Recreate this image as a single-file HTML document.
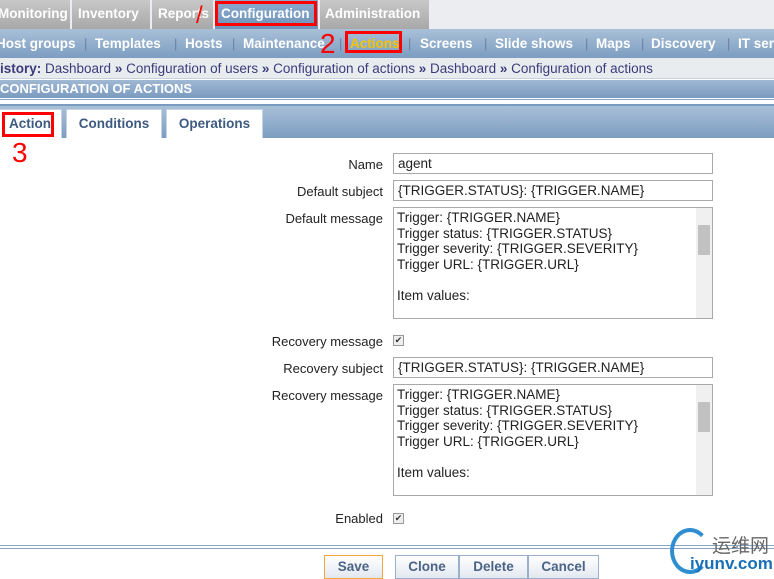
<!DOCTYPE html>
<html><head><meta charset="utf-8"><style>
*{margin:0;padding:0;box-sizing:border-box}
body{width:774px;height:577px;overflow:hidden;background:#fff;font-family:"Liberation Sans",sans-serif;font-size:13px;position:relative}
.abs{position:absolute;white-space:nowrap}
.top{top:0;left:0;width:774px;height:29px;background:#ebedf0}
.tab{position:absolute;top:0;height:29px;background:linear-gradient(#c8c8c8,#a8a8a8);color:#fff;font-weight:bold;font-size:13.5px;line-height:27px;border-right:2px solid #ebedf0;white-space:nowrap;overflow:hidden}
.tab span{position:absolute;top:0}
.sub{top:29px;left:0;width:774px;height:29px;background:linear-gradient(#a9c0d8,#7c9dc1)}
.si{position:absolute;top:29px;line-height:29px;color:#fff;font-weight:bold;font-size:13.5px;white-space:nowrap}
.sp{position:absolute;top:29px;line-height:29px;color:#6a7fa0;font-size:13px}
.hist{top:58px;left:0;width:774px;height:21px;background:#e9ecef;color:#3b3b7b;font-size:13.5px;line-height:21px;border-bottom:1px solid #c8d0dc}
.hdr{top:80px;left:0;width:774px;height:18px;background:linear-gradient(#9fb8d3,#7a9bc0);color:#fff;font-weight:bold;font-size:13px;line-height:18px}
.tabs{top:104px;left:0;width:774px;height:34px;background:linear-gradient(#a9c0d8,#7c9dc1);border-top:2px solid #7a9bc0}
.t{position:absolute;top:5px;height:29px;background:#fff;color:#3d5a80;font-weight:bold;font-size:13.5px;line-height:28px;text-align:center;border:1px solid #c7d3e2;border-bottom:none}
.lbl{position:absolute;right:391px;color:#222;font-size:13px;white-space:nowrap}
.inp{position:absolute;left:393px;width:320px;border:1px solid #a9a9a9;background:#fff;color:#222;font-size:13.5px;padding-left:4px;line-height:19px;height:21px;white-space:nowrap}
.ta{position:absolute;left:393px;width:320px;height:112px;border:1px solid #a9a9a9;font-size:13.5px;line-height:15.5px;padding:2px 3px;color:#222;overflow:hidden;white-space:nowrap}
.sb{position:absolute;right:0;top:0;width:16px;height:110px;background:#f0f0f0}
.sb .th{position:absolute;left:2px;top:17px;width:12px;height:30px;background:#c1c1c1}
.cb{position:absolute;left:393px;width:11px;height:11px;border:1px solid #999;background:#eee;font-size:9px;line-height:9px;text-align:center;color:#333}
.btn{position:absolute;top:555px;height:24px;background:linear-gradient(#fff,#e3e9f1);border:1px solid #98b0cc;color:#4a6486;font-weight:bold;font-size:13.5px;line-height:22px;text-align:center}
.red{position:absolute;border:3px solid #f00}
.hand{position:absolute;color:#f00;font-size:28px;font-family:"Liberation Sans",sans-serif}
</style></head><body>
<div class="abs top"></div>
<div class="tab" style="left:0;width:72px"><span style="left:-2px">Monitoring</span></div>
<div class="tab" style="left:72px;width:80px"><span style="left:6px">Inventory</span></div>
<div class="tab" style="left:152px;width:63px"><span style="left:6px">Reports</span></div>
<div class="tab" style="left:215px;width:105px;background:linear-gradient(#8aaacb,#6f93bb)"><span style="left:6px">Configuration</span></div>
<div class="tab" style="left:320px;width:111px"><span style="left:5px">Administration</span></div>
<div class="abs sub"></div>
<div class="si" style="left:-4px">Host groups</div><div class="sp" style="left:84px">|</div>
<div class="si" style="left:95px">Templates</div><div class="sp" style="left:174px">|</div>
<div class="si" style="left:185px">Hosts</div><div class="sp" style="left:232px">|</div>
<div class="si" style="left:243px">Maintenance</div><div class="sp" style="left:339px">|</div>
<div class="si" style="left:350px;color:#f5c400">Actions</div><div class="sp" style="left:408px">|</div>
<div class="si" style="left:420px">Screens</div><div class="sp" style="left:484px">|</div>
<div class="si" style="left:495px">Slide shows</div><div class="sp" style="left:585px">|</div>
<div class="si" style="left:596px">Maps</div><div class="sp" style="left:641px">|</div>
<div class="si" style="left:651px">Discovery</div><div class="sp" style="left:727px">|</div>
<div class="si" style="left:738px">IT services</div>
<div class="abs hist"><b>istory:</b> Dashboard <b>»</b> Configuration of users <b>»</b> Configuration of actions <b>»</b> Dashboard <b>»</b> Configuration of actions</div>
<div class="abs hdr">CONFIGURATION OF ACTIONS</div>
<div class="abs" style="top:99px;left:0;width:774px;height:1px;background:#8aa4c4"></div>
<div class="abs tabs"></div>
<div class="t" style="left:-2px;width:64px;top:109px">Action</div>
<div class="t" style="left:66px;width:96px;top:109px">Conditions</div>
<div class="t" style="left:166px;width:97px;top:109px">Operations</div>

<div class="lbl" style="top:157px">Name</div>
<div class="inp" style="top:153px">agent</div>
<div class="lbl" style="top:184px">Default subject</div>
<div class="inp" style="top:180px">{TRIGGER.STATUS}: {TRIGGER.NAME}</div>
<div class="lbl" style="top:211px">Default message</div>
<div class="ta" style="top:207px">Trigger: {TRIGGER.NAME}<br>Trigger status: {TRIGGER.STATUS}<br>Trigger severity: {TRIGGER.SEVERITY}<br>Trigger URL: {TRIGGER.URL}<br><br>Item values:<div class="sb"><div class="th"></div></div></div>
<div class="lbl" style="top:334px">Recovery message</div>
<div class="cb" style="top:335px">✔</div>
<div class="lbl" style="top:361px">Recovery subject</div>
<div class="inp" style="top:357px">{TRIGGER.STATUS}: {TRIGGER.NAME}</div>
<div class="lbl" style="top:388px">Recovery message</div>
<div class="ta" style="top:384px">Trigger: {TRIGGER.NAME}<br>Trigger status: {TRIGGER.STATUS}<br>Trigger severity: {TRIGGER.SEVERITY}<br>Trigger URL: {TRIGGER.URL}<br><br>Item values:<div class="sb"><div class="th"></div></div></div>
<div class="lbl" style="top:511px">Enabled</div>
<div class="cb" style="top:513px">✔</div>

<div class="abs" style="top:545px;left:0;width:774px;height:4px;border-top:1px solid #8aa4c4;border-bottom:1px solid #8aa4c4"></div>
<div class="btn" style="left:324px;width:59px;border-color:#f3a73a">Save</div>
<div class="btn" style="left:395px;width:64px">Clone</div>
<div class="btn" style="left:459px;width:69px">Delete</div>
<div class="btn" style="left:528px;width:71px">Cancel</div>
<div class="abs" style="left:670px;top:528px;width:40px;height:46px;border-radius:50%;border:4px solid #2f8ed0;border-right-color:transparent"></div>
<div class="abs" style="left:712px;top:531px;font-size:19px;color:#666;font-family:'Noto Sans CJK SC',sans-serif">运维网</div>
<div class="abs" style="left:690px;top:554px;font-size:17px;color:#1a70b8;font-weight:bold">iyunv.com</div>

<div class="red" style="left:215px;top:1px;width:102px;height:25px"></div>
<div class="red" style="left:345px;top:31px;width:57px;height:22px"></div>
<div class="red" style="left:2px;top:112px;width:52px;height:25px"></div>
<div class="hand" style="left:196px;top:2px;font-size:24px">/</div>
<div class="hand" style="left:320px;top:28px">2</div>
<div class="hand" style="left:12px;top:137px">3</div>
</body></html>
